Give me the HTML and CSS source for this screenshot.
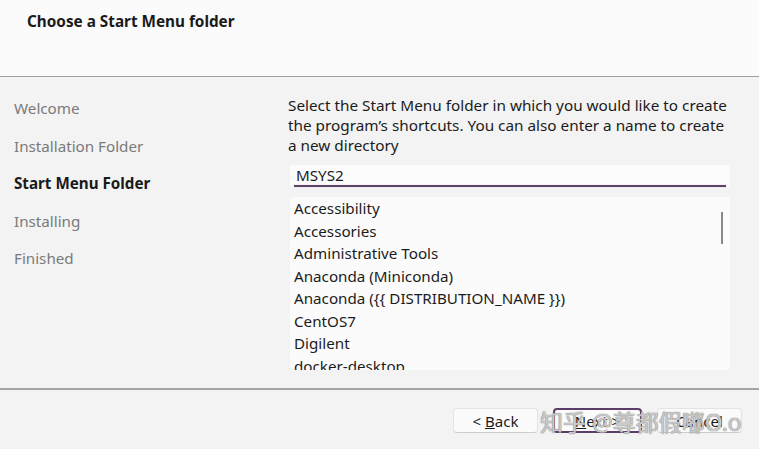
FILE: index.html
```html
<!DOCTYPE html>
<html lang="en">
<head>
    <meta charset="UTF-8">
    <title>MSYS2 Setup</title>
    <link rel="stylesheet" href="styles.css">
</head>
<body>
    <div class="ventana">
        <div class="cabecera">
            <h1>Choose a Start Menu folder</h1>
        </div>
        <div class="cuerpo">
            <ul class="pasos">
                <li>Welcome</li>
                <li>Installation Folder</li>
                <li class="actual">Start Menu Folder</li>
                <li>Installing</li>
                <li>Finished</li>
            </ul>
            <div class="contenido">
                <p class="descripcion">Select the Start Menu folder in which you would like to create the program’s shortcuts. You can also enter a name to create a new directory</p>
                <div class="campo">MSYS2</div>
                <div class="lista">
                    <div class="elementos">
                        <div>Accessibility</div>
                        <div>Accessories</div>
                        <div>Administrative Tools</div>
                        <div>Anaconda (Miniconda)</div>
                        <div>Anaconda ({{ DISTRIBUTION_NAME }})</div>
                        <div>CentOS7</div>
                        <div>Digilent</div>
                        <div>docker-desktop</div>
                    </div>
                    <div class="barra"></div>
                </div>
            </div>
        </div>
        <div class="pie">
            <button class="boton">&lt; <u>B</u>ack</button>
            <button class="boton principal"><u>N</u>ext &gt;</button>
            <button class="boton">Cancel</button>
            <span class="marca">知乎 @尊都假嘟O.o</span>
        </div>
    </div>
</body>
</html>
```

FILE: styles.css
```css
/* Ventana del instalador */
body {
    margin: 0;
    background: #f3f3f3;
    font-family: "Noto Sans", "Noto Sans CJK SC", sans-serif;
    color: #1b1b1b;
}

.ventana {
    width: 759px;
    height: 449px;
    display: flex;
    flex-direction: column;
}

/* Cabecera blanca */
.cabecera {
    height: 77px;
    background: #fbfbfb;
    border-bottom: 1px solid #a0a0a0;
    box-sizing: border-box;
}

h1 {
    margin: 0;
    padding: 11px 0 0 27px;
    font-size: 15.3px;
    font-weight: bold;
    color: #1a1a1a;
}

/* Parte central */
.cuerpo {
    height: 313px;
    display: flex;
    border-bottom: 2px solid #a3a3a3;
    box-sizing: border-box;
}

.pasos {
    list-style: none;
    margin: 0;
    padding: 21px 0 0 14px;
    width: 288px;
    box-sizing: border-box;
}

.pasos li {
    font-size: 15.2px;
    height: 37.5px;
    line-height: 20px;
    color: #7a7a7a;
}

.pasos li.actual {
    font-weight: bold;
    color: #1a1a1a;
}

.contenido {
    width: 442px;
    padding-top: 18px;
}

.descripcion {
    margin: 0;
    font-size: 15.3px;
    line-height: 20px;
}

.campo {
    margin: 10px 0 0 2px;
    height: 22px;
    background: #fcfcfc;
    border-radius: 3px;
    font-size: 15.2px;
    line-height: 21px;
    padding-left: 6px;
    position: relative;
}

.campo::after {
    content: "";
    position: absolute;
    left: 4px;
    right: 4px;
    bottom: 0;
    height: 2px;
    background: #5b4363;
    box-shadow: 0 0 1px #c9a6cf;
}

.lista {
    margin: 10px 0 0 2px;
    height: 173px;
    background: #fbfbfb;
    border-radius: 4px;
    overflow: hidden;
    display: flex;
    justify-content: space-between;
}

.elementos {
    padding: 0 0 0 4px;
    font-size: 15.2px;
    line-height: 22.5px;
}

.barra {
    width: 2px;
    height: 32px;
    margin: 15px 7px 0 0;
    background: #8a8a8a;
}

/* Botones */
.pie {
    flex: 1;
    display: flex;
    justify-content: flex-end;
    align-items: flex-start;
    gap: 15px;
    padding: 18px 17px 0 0;
    position: relative;
}

.boton {
    width: 85px;
    height: 25px;
    background: #fbfbfb;
    border: 1px solid #e3e3e3;
    border-bottom-color: #cdcdcd;
    border-radius: 4px;
    font-family: "Noto Sans", sans-serif;
    font-size: 15px;
    color: #1b1b1b;
    padding: 0;
}

.boton.principal {
    width: 89px;
    border: 2px solid #5b3d68;
}

.marca {
    position: absolute;
    left: 540px;
    top: 19px;
    font-size: 23px;
    line-height: 26px;
    color: rgba(255, 255, 255, 0.6);
    text-shadow: 0 0 1px #7a7a7a, 0 0 1px #7a7a7a;
    pointer-events: none;
}
```
